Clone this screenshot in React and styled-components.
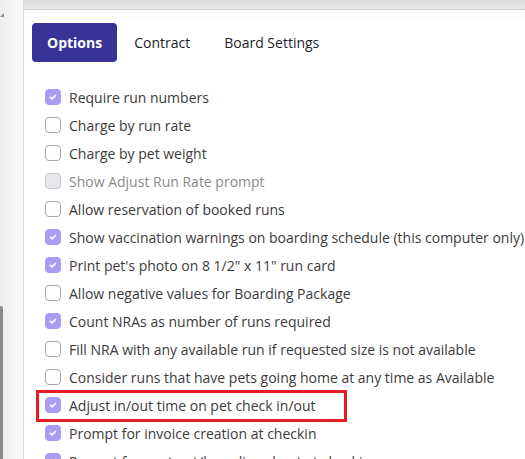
import styled, { createGlobalStyle } from 'styled-components';

const GlobalStyle = createGlobalStyle`
	html, body {
		margin: 0;
		padding: 0;
		background: #ffffff;
		overflow: hidden;
	}
	body {
		font-family: 'Open Sans', 'Noto Sans', sans-serif;
	}
`;

const options = [
	{ label: 'Require run numbers', checked: true },
	{ label: 'Charge by run rate' },
	{ label: 'Charge by pet weight' },
	{ label: 'Show Adjust Run Rate prompt', disabled: true },
	{ label: 'Allow reservation of booked runs' },
	{ label: 'Show vaccination warnings on boarding schedule (this computer only)', checked: true },
	{ label: 'Print pet\'s photo on 8 1/2" x 11" run card', checked: true },
	{ label: 'Allow negative values for Boarding Package' },
	{ label: 'Count NRAs as number of runs required', checked: true },
	{ label: 'Fill NRA with any available run if requested size is not available' },
	{ label: 'Consider runs that have pets going home at any time as Available' },
	{ label: 'Adjust in/out time on pet check in/out', checked: true, highlight: true },
	{ label: 'Prompt for invoice creation at checkin', checked: true },
	{ label: 'Prompt for contract/boarding sheet at checkin', checked: true },
];

const SPage = styled.div`
	display: grid;
	grid-template-columns: 24px 1fr;
	width: 525px;
	height: 459px;
	overflow: hidden;
`;

const SSidebar = styled.div`
	position: relative;
	background: linear-gradient(to right, #eeeeee, #f7f7f7 80%, #fbfbfb);
	border-right: 1px solid #dcdcdc;
`;

const SArrow = styled.div`
	position: absolute;
	left: 0;
	top: 13px;
	width: 0;
	height: 0;
	border-left: 4px solid transparent;
	border-bottom: 4px solid #8c8c8c;
`;

const SScrollEdge = styled.div`
	position: absolute;
	left: 0;
	top: 306px;
	bottom: 0;
	width: 3px;
	background: #8a8a8a;
	border-top-right-radius: 2px;
`;

const SMain = styled.div`
	display: flex;
	flex-direction: column;
	min-width: 0;
`;

const STopBar = styled.div`
	height: 9px;
	flex-shrink: 0;
	background: linear-gradient(to bottom, #dedede, #e9e9e9);
	border-bottom: 1px solid #cfcfcf;
`;

const SContent = styled.div`
	display: flex;
	flex-direction: column;
	padding: 13px 0 0 8px;
	background: linear-gradient(to bottom, #f9f9f9, #ffffff 12px);
`;

const STabs = styled.div`
	display: flex;
	align-items: center;
`;

const STab = styled.button`
	height: 39px;
	padding: ${({ active }) => (active ? '0 15px' : '0 17px')};
	border: none;
	border-radius: 4px;
	font-family: 'Open Sans', 'Noto Sans', sans-serif;
	font-size: 14px;
	font-weight: ${({ active }) => (active ? 700 : 400)};
	color: ${({ active }) => (active ? '#ffffff' : '#1c1c2e')};
	background: ${({ active }) => (active ? '#383497' : 'transparent')};
	cursor: pointer;
`;

const SList = styled.div`
	display: flex;
	flex-direction: column;
	padding: 21px 0 0 4px;
`;

const SRow = styled.label`
	position: relative;
	display: flex;
	align-items: center;
	gap: 8px;
	height: 28px;
	padding-left: 9px;
	white-space: nowrap;
	font-size: 14px;
	color: ${({ disabled }) => (disabled ? '#8a8a8a' : '#3b3b3b')};
`;

const SHighlight = styled.span`
	position: absolute;
	left: 0;
	top: -1px;
	width: 311px;
	height: 32px;
	box-sizing: border-box;
	border: 3px solid #e41c24;
	pointer-events: none;
`;

const SBox = styled.span`
	display: inline-flex;
	align-items: center;
	justify-content: center;
	flex-shrink: 0;
	width: 16px;
	height: 16px;
	box-sizing: border-box;
	border-radius: 4px;
	border: 1px solid ${({ checked, disabled }) => {
		if (checked) return '#a99cf2';
		if (disabled) return '#c4c8ce';
		return '#a3a7ae';
	}};
	background: ${({ checked, disabled }) => {
		if (checked) return '#a99cf2';
		if (disabled) return '#e6e8eb';
		return '#ffffff';
	}};
`;

const Check = () => (
	<svg width="10" height="10" viewBox="0 0 10 10">
		<path d="M2.4 5.2 L4.2 6.9 L7.6 3.3" fill="none" stroke="#ffffff" strokeWidth="1.6" strokeLinecap="round" strokeLinejoin="round" />
	</svg>
);

const Option = ({ label, checked = false, disabled = false, highlight = false }) => (
	<SRow disabled={disabled}>
		<SBox checked={checked} disabled={disabled}>
			{checked && <Check />}
		</SBox>
		<span>{label}</span>
		{highlight && <SHighlight />}
	</SRow>
);

const App = () => (
	<>
		<GlobalStyle />
		<SPage>
			<SSidebar>
				<SArrow />
				<SScrollEdge />
			</SSidebar>
			<SMain>
				<STopBar />
				<SContent>
					<STabs>
						<STab active>Options</STab>
						<STab>Contract</STab>
						<STab>Board Settings</STab>
					</STabs>
					<SList>
						{options.map((o) => (
							<Option key={o.label} {...o} />
						))}
					</SList>
				</SContent>
			</SMain>
		</SPage>
	</>
);

export default App;
